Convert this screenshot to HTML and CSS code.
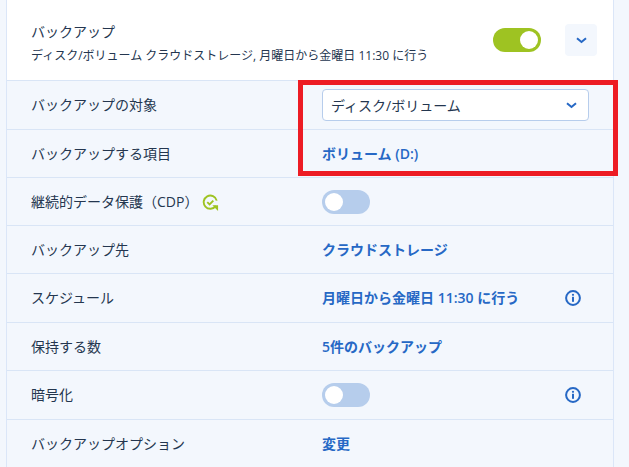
FILE: index.html
```html
<!DOCTYPE html>
<html lang="ja">
<head>
    <meta charset="UTF-8">
    <title>バックアップ</title>
    <link rel="stylesheet" href="styles.css">
</head>
<body>
    <div class="panel">
        <div class="header">
            <div class="header-text">
                <div class="header-title">バックアップ</div>
                <div class="header-sub">ディスク/ボリューム クラウドストレージ, 月曜日から金曜日 11:30 に行う</div>
            </div>
            <div class="toggle on"><span class="knob"></span></div>
            <div class="chevron-btn">
                <svg class="chevron" viewBox="0 0 11 7"><path d="M1 1.2l4.5 3.8L10 1.2"/></svg>
            </div>
        </div>

        <div class="row tall">
            <div class="label">バックアップの対象</div>
            <div class="select">
                <span>ディスク/ボリューム</span>
                <svg class="chevron" viewBox="0 0 11 7"><path d="M1 1.2l4.5 3.8L10 1.2"/></svg>
            </div>
        </div>
        <div class="row">
            <div class="label">バックアップする項目</div>
            <div class="value">ボリューム (D:)</div>
        </div>
        <div class="row">
            <div class="label">継続的データ保護（CDP）
                <svg class="cdp-icon" viewBox="0 0 18 18">
                    <path class="cdp-ring" d="M14.6 12.6A7 7 0 1 1 15.6 7"/>
                    <path class="cdp-check" d="M5.6 8.6l2.4 2.4 4-4"/>
                    <path class="cdp-arrow" d="M11 12h6v6z"/>
                </svg>
            </div>
            <div class="toggle"><span class="knob"></span></div>
        </div>
        <div class="row">
            <div class="label">バックアップ先</div>
            <div class="value">クラウドストレージ</div>
        </div>
        <div class="row tall">
            <div class="label">スケジュール</div>
            <div class="value">月曜日から金曜日 11:30 に行う</div>
            <svg class="info" viewBox="0 0 16 16">
                <circle class="info-ring" cx="8" cy="8" r="6.9"/>
                <circle class="info-dot" cx="8" cy="4.8" r="1.1"/>
                <rect class="info-dot" x="7" y="6.8" width="2" height="5"/>
            </svg>
        </div>
        <div class="row">
            <div class="label">保持する数</div>
            <div class="value">5件のバックアップ</div>
        </div>
        <div class="row tall">
            <div class="label">暗号化</div>
            <div class="toggle"><span class="knob"></span></div>
            <svg class="info" viewBox="0 0 16 16">
                <circle class="info-ring" cx="8" cy="8" r="6.9"/>
                <circle class="info-dot" cx="8" cy="4.8" r="1.1"/>
                <rect class="info-dot" x="7" y="6.8" width="2" height="5"/>
            </svg>
        </div>
        <div class="row">
            <div class="label">バックアップオプション</div>
            <div class="value">変更</div>
        </div>
    </div>
    <div class="highlight"></div>
</body>
</html>
```

FILE: styles.css
```css
* {
    margin: 0;
    padding: 0;
    box-sizing: border-box;
    font-family: "Open Sans", "Noto Sans CJK JP", sans-serif;
}

html, body {
    height: 467px;
    overflow: hidden;
}

body {
    position: relative;
    background: #f3f7fd;
    color: #24364f;
    font-size: 14px;
}

.panel {
    width: 608px;
    margin-left: 6px;
    border-left: 1px solid #dbe6f8;
    border-right: 1px solid #dbe6f8;
}

.header {
    height: 81px;
    padding: 24px 16px 0 24px;
    display: flex;
    align-items: flex-start;
    background: #fff;
    border-bottom: 1px solid #d9e5f6;
}

.header-text {
    flex: 1;
}

.header-title {
    font-size: 14px;
    line-height: 16px;
}

.header-sub {
    margin-top: 7px;
    font-size: 12px;
    line-height: 18px;
    white-space: nowrap;
}

.header .toggle {
    margin: 4px 24px 0 0;
}

.chevron-btn {
    width: 32px;
    height: 32px;
    display: flex;
    justify-content: center;
    align-items: center;
    background: #f3f7fd;
    border-radius: 4px;
}

.chevron {
    width: 11px;
    height: 7px;
}

.chevron path {
    fill: none;
    stroke: #2668c5;
    stroke-width: 2;
}

.row {
    height: 48px;
    padding: 0 15px 0 24px;
    display: flex;
    align-items: center;
    border-bottom: 1px solid #d9e5f6;
}

.row.tall {
    height: 49px;
}

.label {
    width: 291px;
    padding-bottom: 2px;
    flex-shrink: 0;
    display: flex;
    align-items: center;
}

.value {
    flex: 1;
    padding-bottom: 2px;
    color: #2668c5;
    font-weight: 600;
}

.select {
    width: 267px;
    height: 32px;
    padding: 0 11px 0 8px;
    display: flex;
    justify-content: space-between;
    align-items: center;
    background: #fff;
    border: 1px solid #b7cdec;
    border-radius: 4px;
}

.toggle {
    width: 48px;
    height: 24px;
    padding: 3px;
    background: #b6cdec;
    border-radius: 12px;
    flex-shrink: 0;
}

.row .toggle {
    margin-right: auto;
}

.toggle.on {
    padding-left: 27px;
    background: #9ec322;
}

.knob {
    display: block;
    width: 18px;
    height: 18px;
    background: #fff;
    border-radius: 50%;
}

.cdp-icon {
    width: 17px;
    height: 17px;
    margin: 4px 0 0 4px;
}

.cdp-ring, .cdp-check {
    fill: none;
    stroke: #9ec322;
    stroke-width: 2;
}

.cdp-arrow {
    fill: #9ec322;
}

.info {
    width: 16px;
    height: 16px;
    margin-right: 17px;
    flex-shrink: 0;
}

.info-ring {
    fill: none;
    stroke: #2668c5;
    stroke-width: 2;
}

.info-dot {
    fill: #2668c5;
}

.highlight {
    position: absolute;
    left: 298px;
    top: 80px;
    width: 320px;
    height: 96px;
    border: 5px solid #ed1c24;
}
```
